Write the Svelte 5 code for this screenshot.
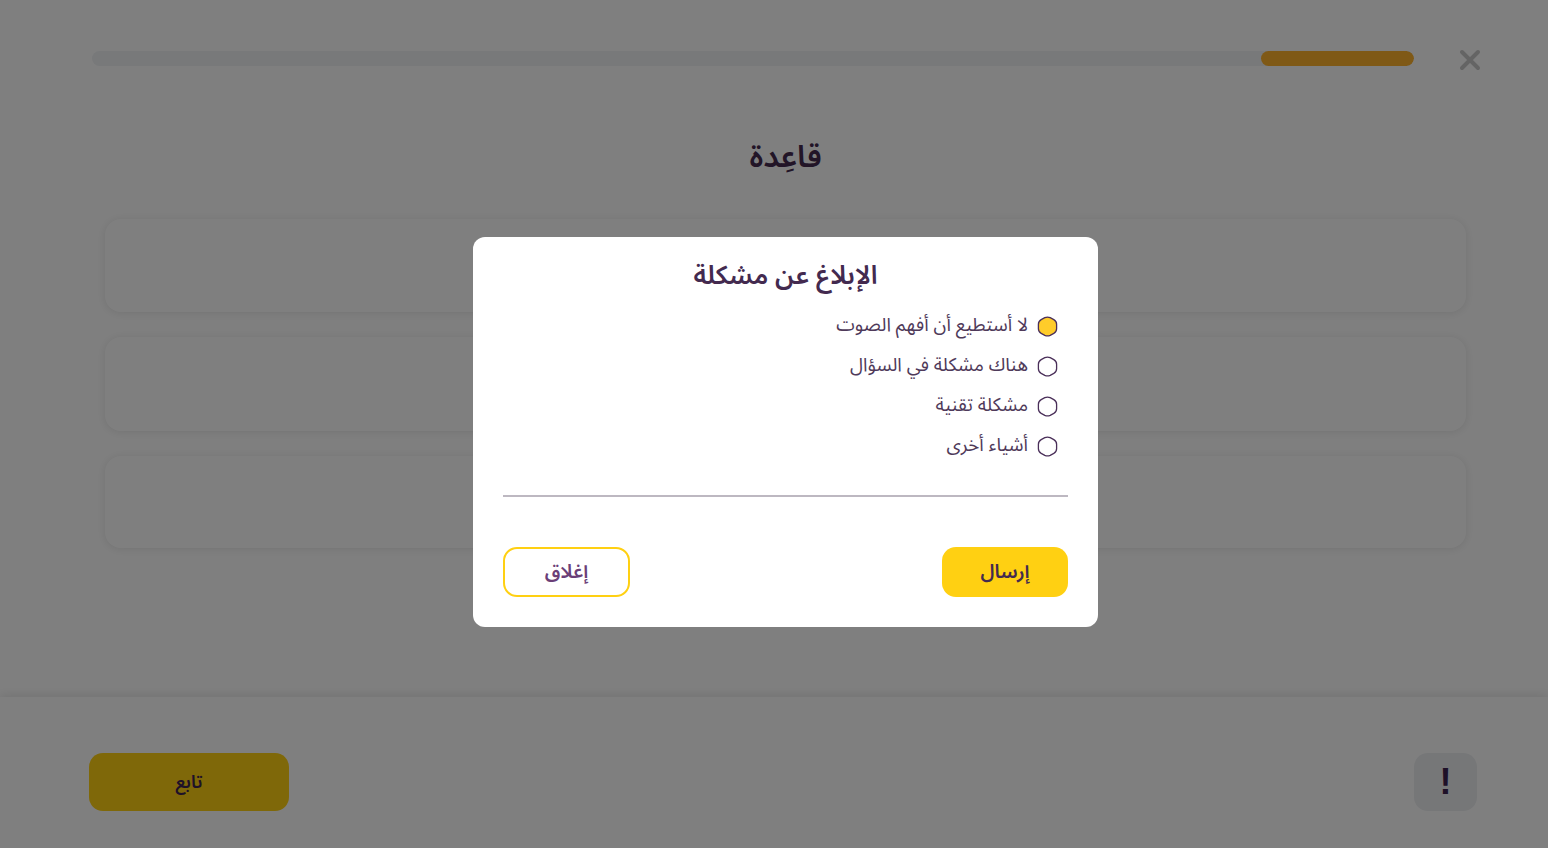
<script>
  const options = ['لا أستطيع أن أفهم الصوت', 'هناك مشكلة في السؤال', 'مشكلة تقنية', 'أشياء أخرى'];
  let selected = $state(0);
</script>

<div class="page" dir="rtl">
  <header class="top">
    <button class="close" aria-label="إغلاق">
      <svg width="22" height="22" viewBox="0 0 22 22"><path d="M3 3 L19 19 M19 3 L3 19" /></svg>
    </button>
    <div class="track"><div class="fill"></div></div>
  </header>
  <main class="content">
    <h1>قاعِدة</h1>
    <div class="cards">
      <div class="card c1"></div>
      <div class="card c2"></div>
      <div class="card c3"></div>
    </div>
  </main>
  <footer class="foot">
    <button class="report">!</button>
    <button class="next">تابع</button>
  </footer>
</div>

<div class="overlay" dir="rtl">
  <div class="modal">
    <h2>الإبلاغ عن مشكلة</h2>
    <div class="options">
      {#each options as o, i}
        <button class="opt" onclick={() => (selected = i)}>
          <svg class="hex" width="21" height="21" viewBox="0 0 21 21">
            <path
              d="M7.8 1.7 Q10.5 0.4 13.2 1.7 L16.8 3.6 Q19.6 5.2 19.6 8.2 L19.6 12.8 Q19.6 15.8 16.8 17.4 L13.2 19.3 Q10.5 20.6 7.8 19.3 L4.2 17.4 Q1.4 15.8 1.4 12.8 L1.4 8.2 Q1.4 5.2 4.2 3.6 Z"
              fill={selected === i ? '#ffcc2a' : '#fff'}
            />
          </svg>
          <span>{o}</span>
        </button>
      {/each}
    </div>
    <div class="line"></div>
    <div class="actions">
      <button class="send">إرسال</button>
      <button class="dismiss">إغلاق</button>
    </div>
  </div>
</div>

<style>
  :global(body) {
    margin: 0;
    background: #fff;
    font-family: "Noto Sans", "Noto Sans Arabic", "DejaVu Sans", sans-serif;
    overflow: hidden;
  }
  button {
    font-family: inherit;
    cursor: pointer;
  }
  .page {
    height: 848px;
    display: flex;
    flex-direction: column;
    box-sizing: border-box;
  }
  .top {
    display: flex;
    align-items: center;
    gap: 45px;
    padding: 51px 67px 0 92px;
    height: 15px;
  }
  .close {
    background: none;
    border: 0;
    padding: 0;
    width: 22px;
    height: 22px;
    display: flex;
    flex: none;
    margin-top: 3px;
  }
  .close path {
    stroke: #c8c8c8;
    stroke-width: 4;
    stroke-linecap: round;
    fill: none;
  }
  .track {
    flex: 1;
    height: 15px;
    border-radius: 8px;
    background: #f0f2f5;
    overflow: hidden;
  }
  .fill {
    width: 153px;
    height: 15px;
    border-radius: 8px;
    background: #ffb32c;
  }
  .content {
    flex: 1;
    padding: 0 82px 0 105px;
    display: flex;
    flex-direction: column;
    align-items: stretch;
  }
  h1 {
    margin: 66px 0 0;
    font-size: 31px;
    line-height: 46px;
    font-weight: 600;
    color: #452a4f;
    text-align: center;
  }
  .cards {
    margin-top: 41px;
    display: flex;
    flex-direction: column;
    gap: 25px;
  }
  .card {
    border-radius: 16px;
    background: #fff;
    box-shadow: 0 1px 10px rgba(0, 0, 0, 0.1);
  }
  .c1 { height: 93px; }
  .c2 { height: 94px; }
  .c3 { height: 92px; }
  .foot {
    height: 151px;
    box-sizing: border-box;
    box-shadow: 0 -2px 10px rgba(0, 0, 0, 0.1);
    padding: 56px 71px 0 89px;
    display: flex;
    justify-content: space-between;
    align-items: flex-start;
  }
  .report {
    width: 63px;
    height: 58px;
    border: 0;
    border-radius: 14px;
    background: #eceef1;
    color: #3d2350;
    font-size: 36px;
    font-weight: 700;
    line-height: 58px;
    padding: 0;
    font-family: "Liberation Sans", sans-serif;
  }
  .next {
    width: 200px;
    height: 58px;
    border: 0;
    border-radius: 14px;
    background: #ffd012;
    color: #3d2350;
    font-size: 18px;
    font-weight: 600;
  }
  .overlay {
    position: fixed;
    inset: 0;
    background: rgba(0, 0, 0, 0.5);
    display: flex;
    justify-content: center;
    align-items: flex-start;
    padding-left: 23px;
    box-sizing: border-box;
  }
  .modal {
    margin-top: 237px;
    width: 625px;
    height: 390px;
    box-sizing: border-box;
    background: #fff;
    border-radius: 12px;
    padding: 19px 30px 30px;
    display: flex;
    flex-direction: column;
  }
  h2 {
    margin: 0;
    font-size: 26px;
    line-height: 36px;
    font-weight: 600;
    color: #432a4f;
    text-align: center;
  }
  .options {
    margin-top: 22px;
    padding-right: 10px;
    display: flex;
    flex-direction: column;
    gap: 16px;
  }
  .opt {
    display: flex;
    align-items: center;
    gap: 9px;
    background: none;
    border: 0;
    padding: 0;
    height: 24px;
    color: #4f3a5a;
    font-size: 18.8px;
    line-height: 24px;
  }
  .opt span {
    position: relative;
    top: -2px;
  }
  .hex path {
    stroke: #4a2f59;
    stroke-width: 1.3;
  }
  .line {
    margin-top: 37px;
    height: 2px;
    background: #bdb8c1;
  }
  .actions {
    margin-top: 50px;
    display: flex;
    justify-content: space-between;
  }
  .send,
  .dismiss {
    width: 126px;
    height: 50px;
    border-radius: 14px;
    font-size: 19.4px;
    font-weight: 600;
    padding: 0 0 2px;
  }
  .send {
    background: #ffd012;
    border: 0;
    color: #432a4f;
  }
  .dismiss {
    width: 127px;
    background: #fff;
    border: 2px solid #ffd012;
    color: #6b3f78;
  }
</style>
